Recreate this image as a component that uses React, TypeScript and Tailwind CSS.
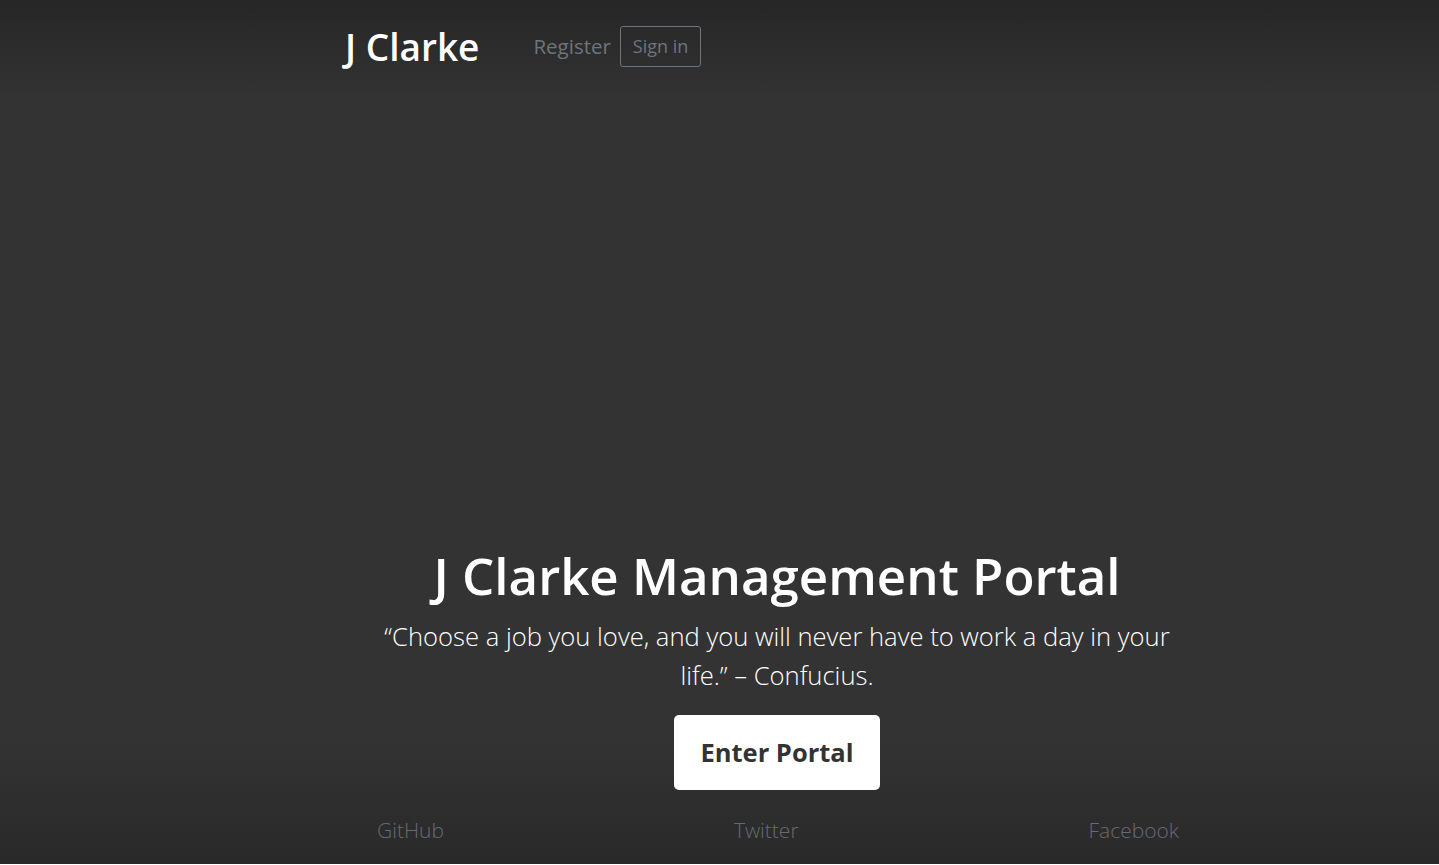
export default function App() {
  return (
    <div
      className="flex h-[864px] w-full flex-col bg-[linear-gradient(to_bottom,#262626_0px,#333333_100px,#333333_740px,#292929_864px)] text-white"
      style={{ fontFamily: '"Open Sans", "Noto Sans", sans-serif' }}
    >
      <header className="flex items-center pl-[345px] pt-[26px]">
        <h3 className="text-[37px] font-semibold leading-[41px]">J Clarke</h3>
        <nav className="ml-[54px] flex items-center gap-[9px]">
          <a className="text-[20.5px] text-[#6c757d]">Register</a>
          <a className="rounded-[3px] border border-[#6c757d] px-[12px] py-[6px] text-[18px] leading-[27px] text-[#6c757d]">
            Sign in
          </a>
        </nav>
      </header>

      <main className="mt-auto box-content flex w-[864px] flex-col items-center pl-[345px]">
        <h1 className="text-[51px] font-semibold leading-[60px]">J Clarke Management Portal</h1>
        <p className="mt-[12px] w-[810px] text-center text-[25.6px] font-light leading-[39px]">
          “Choose a job you love, and you will never have to work a day in your life.” – Confucius.
        </p>
        <button className="mt-[20px] h-[75px] w-[206px] rounded-[5px] bg-white text-[25.5px] font-bold text-[#333333]">
          Enter Portal
        </button>
      </main>

      <footer className="flex justify-between pb-[18px] pl-[377px] pr-[260px] pt-[25px] text-[21px] font-light text-[#646b72]">
        <a>GitHub</a>
        <a>Twitter</a>
        <a>Facebook</a>
      </footer>
    </div>
  );
}
